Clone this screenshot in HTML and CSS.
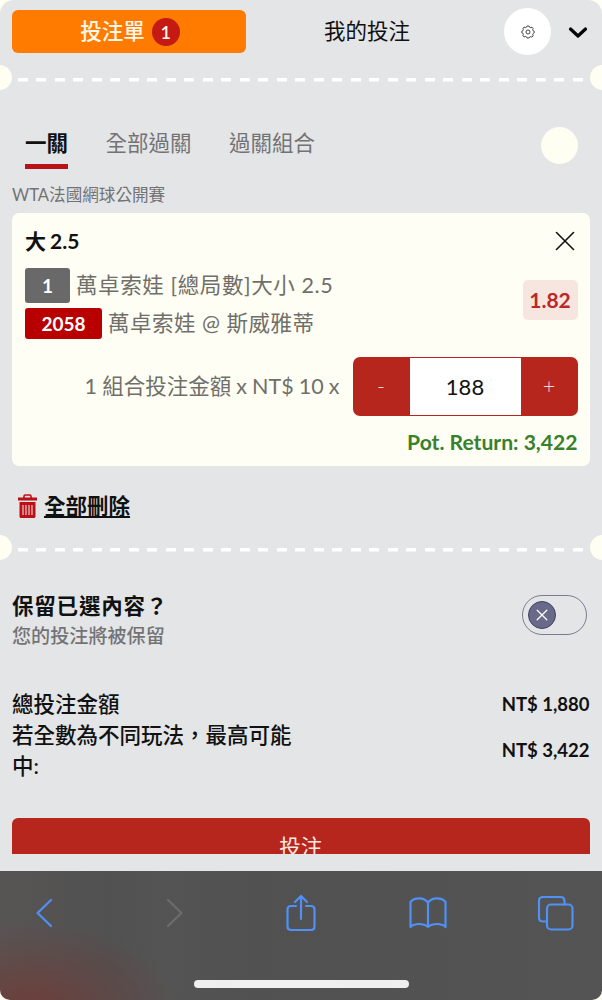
FILE: index.html
```html
<!DOCTYPE html>
<html lang="zh-Hant">

<head>
    <meta charset="UTF-8">
    <meta name="viewport" content="width=device-width, initial-scale=1.0">
    <title>投注單</title>
    <link rel="stylesheet" href="styles.css">
</head>

<body>
    <div class="slip">
        <header class="header">
            <button class="tab-slip">投注單<span class="count">1</span></button>
            <button class="tab-bets">我的投注</button>
            <button class="settings">
                <svg width="14" height="14" viewBox="0 0 14 14" fill="none" stroke="#333" stroke-width="0.9">
                    <path d="M5.5 2.2 6 1h2l.5 1.2 1.3.5 1.2-.5 1.2 1.3-.5 1.2.5 1.2 1 .4v1.6l-1 .5-.5 1.3.5 1.2-1.3 1.2-1.2-.5-1.2.5L8 13H6l-.5-1.1-1.2-.5-1.2.5-1.3-1.2.5-1.2-.5-1.3-1-.4V6.2l1-.4.5-1.2-.5-1.2 1.3-1.2 1.2.5z"/>
                    <circle cx="7" cy="7" r="2"/>
                </svg>
            </button>
            <svg class="chevron" width="20" height="14" viewBox="0 0 20 14" fill="none" stroke="#050505" stroke-width="3.2" stroke-linecap="round" stroke-linejoin="round">
                <path d="M2.5 4 10 11l7.500-7"/>
            </svg>
        </header>

        <div class="tear"></div>

        <nav class="modes">
            <a class="mode active">一關</a>
            <a class="mode">全部過關</a>
            <a class="mode">過關組合</a>
            <span class="dot"></span>
        </nav>

        <p class="league">WTA法國網球公開賽</p>

        <section class="card">
            <div class="card-head">
                <h2>大 2.5</h2>
                <svg width="20" height="20" viewBox="0 0 20 20" stroke="#111" stroke-width="1.6" stroke-linecap="round">
                    <path d="M1.500 1.500l17 17M18.500 1.500l-17 17"/>
                </svg>
            </div>
            <div class="pick">
                <div>
                    <div class="pick-row"><span class="tag tag-grey">1</span><span class="pick-market">萬卓索娃 [總局數]大小 2.5</span></div>
                    <div class="pick-row"><span class="tag tag-red">2058</span><span class="pick-match">萬卓索娃 @ 斯威雅蒂</span></div>
                </div>
                <span class="odds">1.82</span>
            </div>
            <div class="stake">
                <span class="stake-label">1 組合投注金額 x NT$ 10 x</span>
                <div class="stepper">
                    <button>-</button>
                    <span class="amount">188</span>
                    <button>+</button>
                </div>
            </div>
            <p class="return">Pot. Return: 3,422</p>
        </section>

        <div class="remove">
            <svg width="19" height="25" viewBox="0 0 19 25">
                <path d="M6 4V2.200Q6 1 7.200 1h4.600Q13 1 13 2.200V4" fill="none" stroke="#bd1016" stroke-width="1.6"/>
                <path d="M0 3.500h19v3H0zM1.500 8h16v14.500q0 1.500-1.500 1.500H3q-1.500 0-1.500-1.500z" fill="#bd1016"/>
                <path d="M5 11v10M8 11v10M11 11v10M14 11v10" stroke="#e4dfe0" stroke-width="1.1"/>
            </svg>
            <a>全部刪除</a>
        </div>

        <div class="tear"></div>

        <div class="keep">
            <div>
                <h3>保留已選內容？</h3>
                <p>您的投注將被保留</p>
            </div>
            <div class="toggle">
                <span class="knob">
                    <svg width="12" height="12" viewBox="0 0 12 12" stroke="#fff" stroke-width="1.3" stroke-linecap="round">
                        <path d="M1.200 1.200l9.600 9.600M10.800 1.200l-9.600 9.600"/>
                    </svg>
                </span>
            </div>
        </div>

        <div class="totals">
            <div class="total"><span>總投注金額</span><b>NT$ 1,880</b></div>
            <div class="total"><span class="total-name">若全數為不同玩法，最高可能中:</span><b>NT$ 3,422</b></div>
        </div>

        <div class="submit-wrap">
            <button class="submit">投注</button>
        </div>
    </div>

    <footer class="toolbar">
        <div class="tools">
            <svg width="20" height="32" viewBox="0 0 20 32"><path d="M17 3 3.500 16 17 29"/></svg>
            <svg class="disabled" width="20" height="32" viewBox="0 0 20 32"><path d="M3 3l13.500 13L3 29"/></svg>
            <svg width="32" height="40" viewBox="0 0 32 40">
                <path d="M11 13H6Q2.500 13 2.500 16.500v17Q2.500 37 6 37h20q3.500 0 3.500-3.500v-17Q29.500 13 26 13H21M16 26V3.500M10 9 16 3 22 9"/>
            </svg>
            <svg width="38" height="34" viewBox="0 0 38 34">
                <path d="M19 6.500C15 1 5.500 1 1.500 6v25c4-4 13-4 17.500 0 4.500-4 13.500-4 17.500 0V6C32.500 1 23 1 19 6.500V31"/>
            </svg>
            <svg width="37" height="36" viewBox="0 0 37 36">
                <path d="M9.500 26.500H6Q2 26.500 2 22.500V6q0-4 4-4h17.500q4 0 4 4v3.500"/>
                <rect x="10" y="9.500" width="25.500" height="25" rx="4"/>
            </svg>
        </div>
        <div class="home"></div>
    </footer>
</body>

</html>
```
FILE: styles.css
```css
* {
    box-sizing: border-box;
}

body {
    margin: 0;
    width: 602px;
    height: 1000px;
    overflow: hidden;
    background: #fffef2;
    font-family: Lato, "Noto Sans CJK TC", sans-serif;
    font-size: 21.5px;
    line-height: 31px;
    color: #111;
}

h2,
h3,
p {
    margin: 0;
    font-size: inherit;
}

button {
    border: none;
    padding: 0;
    font: inherit;
    color: inherit;
    background: none;
}

svg {
    display: block;
    flex: none;
}

.slip {
    height: 871px;
    padding: 0 12.500px 0 12px;
    background: #e4e5e7;
    border-radius: 14px 14px 0 0;
}

.header {
    display: flex;
    align-items: center;
    height: 65px;
    padding-bottom: 2px;
}

.tab-slip {
    display: flex;
    align-items: center;
    justify-content: center;
    gap: 7px;
    width: 234px;
    height: 43px;
    padding-left: 2px;
    border-radius: 6px;
    background: #ff7b00;
    color: #fff8e8;
    font-weight: 500;
}

.count {
    width: 28px;
    height: 28px;
    border-radius: 50%;
    background: #c51a13;
    font-size: 18px;
    font-weight: 600;
    line-height: 28px;
}

.tab-bets {
    width: 242px;
}

.settings {
    display: flex;
    align-items: center;
    justify-content: center;
    width: 47px;
    height: 47px;
    margin-left: 16px;
    border-radius: 50%;
    background: #fff;
}

.chevron {
    margin-left: 17px;
}

/* perforated line with a notch at each edge */
.tear {
    position: relative;
    height: 28px;
    margin: 0 -12.500px 0 -12px;
    background: repeating-linear-gradient(90deg, #fff 0 10px, transparent 10px 18.5px) 18px 13px / 566px 3.500px no-repeat;
}

.tear::before,
.tear::after {
    content: "";
    position: absolute;
    top: 0;
    width: 25px;
    height: 25px;
    border-radius: 50%;
    background: #fffef2;
}

.tear::before {
    left: -13px;
}

.tear::after {
    right: -13px;
}

.modes {
    display: flex;
    align-items: flex-start;
    height: 90px;
    padding: 34px 12px 0 13px;
    gap: 37.5px;
    color: #737375;
}

.mode {
    height: 42px;
    line-height: 33px;
}

.mode.active {
    border-bottom: 5px solid #b9131a;
    color: #111;
    font-weight: 700;
}

.dot {
    width: 37px;
    height: 37px;
    margin-left: auto;
    border-radius: 50%;
    background: #fffef2;
}

.league {
    height: 29.5px;
    font-size: 16.6px;
    line-height: 25px;
    color: #737375;
}

.card {
    height: 253px;
    padding: 12px 12px 0 13px;
    border-radius: 7px;
    background: #fffef4;
}

.card-head {
    display: flex;
    align-items: center;
    justify-content: space-between;
    height: 32px;
    padding-right: 3px;
}

.card-head h2 {
    font-size: 21px;
    font-weight: 700;
    word-spacing: -1px;
}

.pick {
    display: flex;
    justify-content: space-between;
    align-items: center;
    margin-top: 11px;
    color: #6f6f6a;
}

.pick-row {
    display: flex;
    align-items: center;
    gap: 6px;
    margin-bottom: 5px;
}

.pick-market {
    letter-spacing: 0.6px;
}

.pick-match {
    letter-spacing: 0.5px;
}

.tag {
    height: 31px;
    border-radius: 3px;
    color: #fff;
    font-size: 19px;
    font-weight: 700;
    line-height: 32px;
    text-align: center;
}

.tag-grey {
    width: 45px;
    height: 35px;
    line-height: 35px;
    background: #696969;
}

.tag-red {
    width: 77px;
    background: #b80000;
}

.odds {
    width: 55px;
    height: 40px;
    margin-bottom: 12px;
    border-radius: 5px;
    background: #f7e5df;
    color: #b9292a;
    font-size: 21px;
    font-weight: 700;
    line-height: 40px;
    text-align: center;
}

.stake {
    display: flex;
    align-items: center;
    justify-content: flex-end;
    gap: 13px;
    margin-top: 13px;
    color: #6f6f6a;
}

.stake-label {
    word-spacing: -0.4px;
}

.stepper {
    display: flex;
    width: 225px;
    height: 59px;
    border-radius: 7px;
    background: #b6261c;
}

.stepper button {
    width: 57px;
    color: #fbdcd5;
    font-weight: 300;
}

.amount {
    flex: 1;
    margin: 1px 0;
    background: #fff;
    color: #111;
    font-size: 22px;
    line-height: 58px;
    text-align: center;
}

.return {
    margin-top: 10px;
    color: #37812c;
    font-size: 21.1px;
    font-weight: 700;
    text-align: right;
}

.remove {
    display: flex;
    align-items: center;
    gap: 7px;
    height: 69px;
    padding: 12px 0 0 6px;
    font-weight: 700;
}

.remove a {
    text-decoration: underline;
    text-decoration-thickness: 2px;
    text-underline-offset: 2px;
}

.keep {
    display: flex;
    justify-content: space-between;
    height: 126px;
    padding: 28px 3px 0 0;
}

.keep h3 {
    font-weight: 700;
    letter-spacing: 0.8px;
}

.keep p {
    font-size: 19.1px;
    line-height: 27px;
    color: #737375;
    font-weight: 500;
}

.toggle {
    width: 65px;
    height: 40px;
    margin-top: 4px;
    padding: 5px;
    border: 1.500px solid #7b7b8d;
    border-radius: 20px;
}

.knob {
    display: flex;
    align-items: center;
    justify-content: center;
    width: 28px;
    height: 28px;
    border: 1px solid #454263;
    border-radius: 50%;
    background: #69698a;
}

.totals {
    height: 129px;
    font-weight: 500;
}

.total {
    display: flex;
    align-items: center;
    justify-content: space-between;
}

.total b {
    font-size: 18.500px;
}

.total-name {
    width: 285px;
}

.submit-wrap {
    height: 36px;
    overflow: hidden;
}

.submit {
    width: 100%;
    height: 60px;
    border-radius: 6px;
    background: #b6261c;
    color: #fbe9e0;
}

.toolbar {
    height: 129px;
    background:
        radial-gradient(ellipse 150px 85px at 30px 135px, rgba(116, 55, 50, 0.75), rgba(116, 55, 50, 0.3) 55%, rgba(116, 55, 50, 0)),
        linear-gradient(90deg, #575554, #515151 18%, #545454 27%, #515151 42%, #545454);
    border-radius: 0 0 10px 10px;
}

.tools {
    display: grid;
    grid-template-columns: 131px 120px 124px 128px 37px;
    align-items: center;
    height: 84px;
    padding-left: 34px;
}

.tools svg {
    fill: none;
    stroke: #4f91f5;
    stroke-width: 2.2;
    stroke-linecap: round;
    stroke-linejoin: round;
}

.tools .disabled {
    stroke: #6c6c6c;
}

.home {
    width: 215px;
    height: 8px;
    margin: 25px auto 0;
    border-radius: 4px;
    background: #efefef;
}
```
